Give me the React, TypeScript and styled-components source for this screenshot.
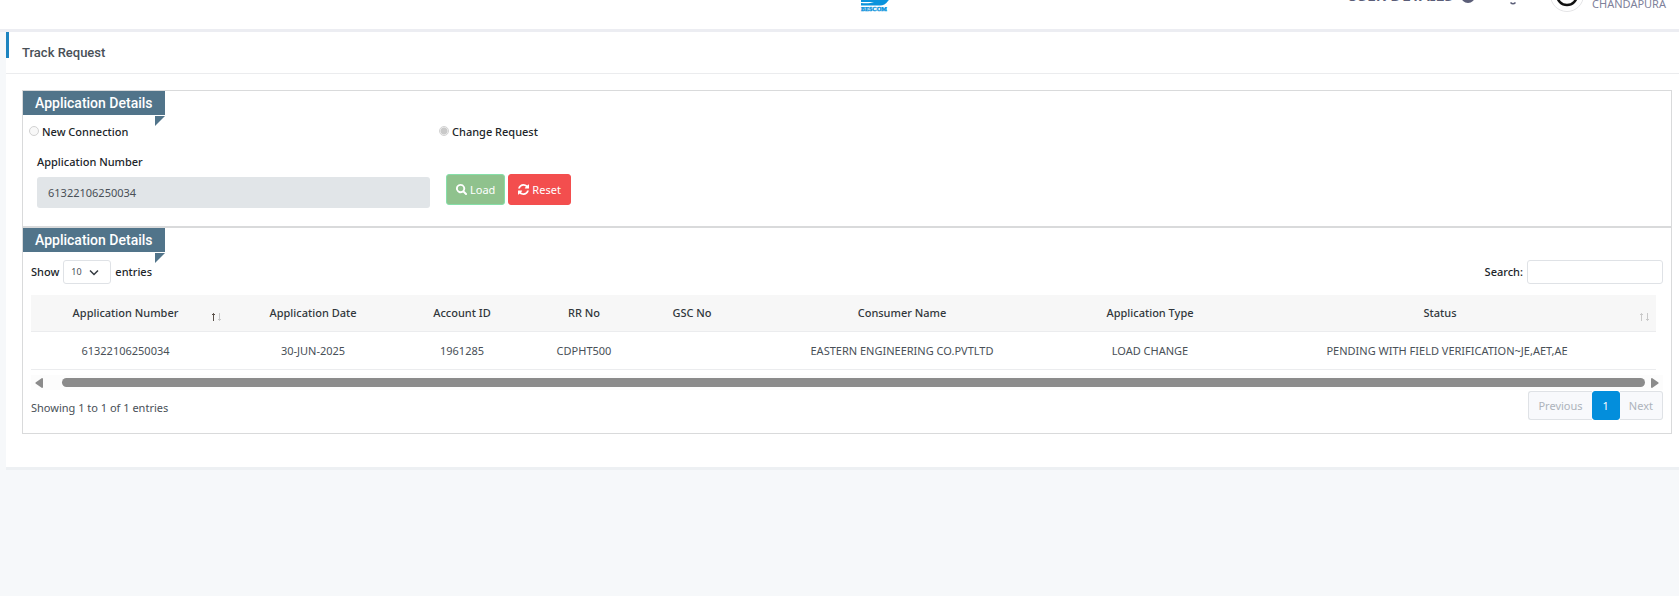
import React from 'react';
import styled, { createGlobalStyle } from 'styled-components';

const GlobalStyle = createGlobalStyle`
  *, *::before, *::after { box-sizing: border-box; }
  body {
    margin: 0;
    background: #f6f8fa;
    color: #495057;
    font-family: "Noto Sans", "Open Sans", sans-serif;
    font-size: 11px;
    line-height: 16px;
  }
  button, input, select { font: inherit; }
`;

const TopBar = styled.header`
  display: grid;
  grid-template-columns: 1fr auto 1fr;
  grid-template-rows: 29px;
  align-items: end;
  height: 32px;
  padding: 0 13px 0 83px;
  overflow: hidden;
  background: #fff;
  border-bottom: 3px solid #ecedf2;
`;

const Logo = styled.svg`
  grid-column: 2;
  display: block;
  width: 30px;
  height: 40px;
  margin-bottom: 17px;
`;

const UserArea = styled.div`
  display: flex;
  justify-content: flex-end;
  align-items: flex-end;
  color: #5b5e78;
`;

const GuideLink = styled.a`
  display: flex;
  align-items: flex-end;
  gap: 8px;
  margin-bottom: 26px;
  color: inherit;
  font-size: 16px;
  font-weight: 600;
  line-height: 16px;
  text-decoration: none;
`;

const InfoDot = styled.svg`
  width: 14px;
  height: 14px;
`;

const Bell = styled.svg`
  width: 14px;
  height: 18px;
  margin: 0 30px 24px 31px;
`;

const Avatar = styled.svg`
  width: 34px;
  height: 34px;
  margin: 0 8px 17px 0;
`;

const Place = styled.span`
  margin-bottom: 17px;
  color: #7e819a;
`;

const Card = styled.main`
  margin-left: 6px;
  background: #fff;
  border-bottom: 3px solid #edf0f3;
`;

const CardHeader = styled.div`
  display: flex;
  align-items: flex-start;
  height: 42px;
  border-bottom: 1px solid #ebecee;
`;

const Accent = styled.span`
  width: 3px;
  height: 26px;
  background: #1c84c0;
`;

const PageTitle = styled.h1`
  margin: 12px 0 0 13px;
  color: #495057;
  font: 500 13px/18px Roboto, sans-serif;
`;

const CardBody = styled.div`
  padding: 16px 7px 33px 16px;
`;

const Panel = styled.section`
  border: 1px solid #d9dadb;
`;

const Ribbon = styled.h2`
  position: relative;
  width: 142px;
  height: 24px;
  margin: 0;
  padding-left: 12px;
  background: #51748a;
  color: #fff;
  font: 500 14px/24px Roboto, sans-serif;
  white-space: nowrap;

  &::after {
    content: "";
    position: absolute;
    right: 0;
    top: 25px;
    border-top: 10px solid #51748a;
    border-right: 10px solid transparent;
  }
`;

const RadioRow = styled.div`
  display: grid;
  grid-template-columns: repeat(4, 1fr);
  padding: 9px 2px 0 6px;
`;

const RadioLabel = styled.label`
  display: flex;
  align-items: center;
  gap: 3px;
  color: #212529;
  font-weight: 500;
`;

const Radio = styled.input`
  appearance: none;
  width: 10px;
  height: 10px;
  margin: 0 0 2px;
  border: 1px solid #d2d2d2;
  border-radius: 50%;
  background: #f8f8f8;

  &:checked {
    background: radial-gradient(circle, #c9c9c9 0 3px, #f8f8f8 4px);
  }
`;

const FormRow = styled.div`
  display: grid;
  grid-template-columns: repeat(4, 1fr);
  gap: 16px;
  align-items: end;
  padding: 14px 14px 18px;
`;

const Field = styled.div`
  display: flex;
  flex-direction: column;
  gap: 7px;
`;

const FieldLabel = styled.label`
  color: #212529;
  font-weight: 500;
`;

const TextBox = styled.input`
  width: 100%;
  height: 31px;
  padding: 0 11px;
  border: 0;
  border-radius: 3px;
  background: #e1e5e8;
  color: #495057;
`;

const Buttons = styled.div`
  display: flex;
  gap: 3px;
  padding-bottom: 3px;
`;

const ActionButton = styled.button<{ $tone: 'load' | 'reset' }>`
  display: flex;
  align-items: center;
  gap: 3px;
  height: 31px;
  padding: 0 9px;
  border: 1px solid ${p => (p.$tone === 'load' ? '#86dfa9' : '#f34e4e')};
  border-radius: 3px;
  background: ${p => (p.$tone === 'load' ? '#8fc28d' : '#f34e4e')};
  color: #fff;
  white-space: nowrap;

  svg { width: 11px; height: 11px; fill: currentColor; }
`;

const Toolbar = styled.div`
  display: flex;
  justify-content: space-between;
  padding: 8px 8px 0;
`;

const ToolLabel = styled.label`
  display: flex;
  align-items: center;
  gap: 4px;
  color: #212529;
  font-weight: 500;
`;

const LengthBox = styled.span`
  position: relative;
  display: flex;

  svg {
    position: absolute;
    right: 12px;
    top: 9px;
    width: 10px;
    height: 7px;
    pointer-events: none;
  }
`;

const LengthSelect = styled.select`
  appearance: none;
  width: 48px;
  height: 24px;
  padding: 0 7px;
  border: 1px solid #dfe2e6;
  border-radius: 3px;
  background: #fff;
  color: #495057;
  font-size: 9px;
  font-weight: 400;
`;

const SearchBox = styled.input`
  width: 136px;
  height: 24px;
  border: 1px solid #dfe2e6;
  border-radius: 3px;
  background: #fff;
`;

const TableWrap = styled.div`
  padding: 11px 15px 0 8px;
`;

const Table = styled.table`
  width: 100%;
  table-layout: fixed;
  border-collapse: separate;
  border-spacing: 0;
  text-align: center;
`;

const HeadCell = styled.th<{ $end?: number }>`
  position: relative;
  height: 37px;
  padding: 0 ${p => p.$end ?? 0}px 0 0;
  border-bottom: 1px solid #ebecee;
  background: #f7f7f7;
  color: #32373c;
  font-weight: 500;
`;

const SortIcon = styled.svg`
  position: absolute;
  right: 6px;
  bottom: 9px;
  width: 11px;
  height: 10px;
`;

const Cell = styled.td<{ $end?: number }>`
  height: 38px;
  padding: 0 ${p => p.$end ?? 0}px 0 0;
  border-bottom: 1px solid #ebecee;
  white-space: nowrap;
`;

const ScrollBar = styled.div`
  display: flex;
  align-items: center;
  gap: 9px;
  height: 15px;
  margin: 5px 8px 0;
  padding: 0 4px;
  background: #fcfcfc;
`;

const ScrollArrow = styled.button`
  display: flex;
  padding: 0;
  border: 0;
  background: none;

  svg { width: 8px; height: 10px; fill: #8b8b8b; }
`;

const Thumb = styled.div`
  flex: 1;
  height: 9px;
  margin: 0 -3px 0 10px;
  border-radius: 5px;
  background: #8b8b8b;
`;

const TableFooter = styled.div`
  display: flex;
  justify-content: space-between;
  padding: 1px 8px 13px;
`;

const Info = styled.p`
  margin: 9px 0 0;
`;

const Pager = styled.nav`
  display: flex;
`;

const PageButton = styled.button<{ $active?: boolean; $side?: 'left' | 'right' }>`
  height: 29px;
  padding: 0 ${p => (p.$active ? 10 : 9)}px;
  border: 1px solid ${p => (p.$active ? '#038edc' : '#dfe2e6')};
  border-${p => (p.$side === 'left' ? 'right' : 'left')}-width: ${p => (p.$active ? 1 : 0)}px;
  border-radius: ${p => (p.$active ? '3px' : p.$side === 'left' ? '3px 0 0 3px' : '0 3px 3px 0')};
  background: ${p => (p.$active ? '#038edc' : '#f8f9fc')};
  color: ${p => (p.$active ? '#fff' : '#adb3bb')};
`;

type Column = { title: string; value: string; width: number; sort?: 'asc' | 'none'; headEnd?: number; cellEnd?: number };

const columns: Column[] = [
  { title: 'Application Number', value: '61322106250034', width: 197, sort: 'asc', headEnd: 8, cellEnd: 8 },
  { title: 'Application Date', value: '30-JUN-2025', width: 170 },
  { title: 'Account ID', value: '1961285', width: 128 },
  { title: 'RR No', value: 'CDPHT500', width: 116 },
  { title: 'GSC No', value: '', width: 100 },
  { title: 'Consumer Name', value: 'EASTERN ENGINEERING CO.PVTLTD', width: 320 },
  { title: 'Application Type', value: 'LOAD CHANGE', width: 176 },
  { title: 'Status', value: 'PENDING WITH FIELD VERIFICATION~JE,AET,AE', width: 418, sort: 'none', headEnd: 14 },
];

function Sort({ active }: { active: boolean }) {
  return (
    <SortIcon viewBox="0 0 11 10" fill="none" aria-hidden="true">
      <path d="M2.5 9V1.5M1 3l1.5-1.5L4 3" stroke={active ? '#5a5048' : '#c9c9c9'} />
      <path d="M8.5 1v7.500M7 7l1.500 1.500L10 7" stroke="#c9c9c9" />
    </SortIcon>
  );
}

export default function App() {
  return (
    <>
      <GlobalStyle />
      <TopBar>
        <Logo viewBox="0 0 30 40" role="img" aria-label="BESCOM">
          <path d="M1 0h29c1 15 3 24-2 29-2 3-5 4.500-8 4.500H1V31c5 .5 9 .5 13-1H1z" fill="#0a93dc" />
          <text x="14" y="39" textAnchor="middle" textRendering="geometricPrecision" fontFamily="Liberation Serif, serif" fontWeight="700" fontSize="6" fill="#0a93dc" stroke="#0a93dc" strokeWidth=".4">BESCOM</text>
        </Logo>
        <UserArea>
          <GuideLink href="#">
            USER DETAILS
            <InfoDot viewBox="0 0 14 14" aria-hidden="true"><circle cx="7" cy="7" r="7" fill="#5b5e78" /></InfoDot>
          </GuideLink>
          <Bell viewBox="0 0 14 18" fill="none" stroke="#5b5e78" strokeWidth="1.600" aria-hidden="true">
            <path d="M1 11c2-2 1.500-4 2-6 .5-5 7.500-5 8 0 .5 2 0 4 2 6zM4.500 15.500q2.500 2.500 5 0" />
          </Bell>
          <Avatar viewBox="0 0 34 34" aria-hidden="true">
            <circle cx="17" cy="17" r="16.500" fill="#fff" stroke="#e4e4e6" />
            <circle cx="17" cy="17" r="10" fill="#fff" stroke="#111" strokeWidth="2.500" />
          </Avatar>
          <Place>CHANDAPURA</Place>
        </UserArea>
      </TopBar>

      <Card>
        <CardHeader>
          <Accent />
          <PageTitle>Track Request</PageTitle>
        </CardHeader>
        <CardBody>
          <Panel>
            <Ribbon>Application Details</Ribbon>
            <RadioRow>
              <RadioLabel><Radio type="radio" name="kind" disabled />New Connection</RadioLabel>
              <RadioLabel><Radio type="radio" name="kind" disabled defaultChecked />Change Request</RadioLabel>
            </RadioRow>
            <FormRow>
              <Field>
                <FieldLabel htmlFor="appNo">Application Number</FieldLabel>
                <TextBox id="appNo" defaultValue="61322106250034" disabled />
              </Field>
              <Buttons>
                <ActionButton $tone="load" type="button" disabled>
                  <svg viewBox="0 0 12 12" aria-hidden="true">
                    <path fillRule="evenodd" d="M5 0a5 5 0 1 0 2.700 9.200L10.200 11.700a1 1 0 0 0 1.500-1.500L9.200 7.700A5 5 0 0 0 5 0zm0 2a3 3 0 1 1 0 6 3 3 0 0 1 0-6z" />
                  </svg>
                  Load
                </ActionButton>
                <ActionButton $tone="reset" type="button">
                  <svg viewBox="0 0 1536 1536" aria-hidden="true">
                    <path d="M1511 928q0 5-1 7-64 268-268 434.500T764 1536q-146 0-282.500-55T238 1324l-129 129q-19 19-45 19t-45-19-19-45V960q0-26 19-45t45-19h448q26 0 45 19t19 45-19 45l-137 137q71 66 161 102t187 36q134 0 250-65t186-179q11-17 53-117 8-23 30-23h192q13 0 22.500 9.500t9.500 22.500zm25-800v448q0 26-19 45t-45 19h-448q-26 0-45-19t-19-45 19-45l138-138Q969 256 768 256q-134 0-250 65T332 500q-11 17-53 117-8 23-30 23H50q-13 0-22.500-9.500T18 608v-7q65-268 270-434.500T768 0q146 0 284 55.500T1297 212l130-129q19-19 45-19t45 19 19 45z" />
                  </svg>
                  Reset
                </ActionButton>
              </Buttons>
            </FormRow>
          </Panel>

          <Panel>
            <Ribbon>Application Details</Ribbon>
            <Toolbar>
              <ToolLabel>
                Show
                <LengthBox>
                  <LengthSelect defaultValue="10">
                    <option>10</option>
                    <option>25</option>
                    <option>50</option>
                  </LengthSelect>
                  <svg viewBox="0 0 10 7" fill="none" stroke="#343a40" strokeWidth="1.500" aria-hidden="true"><path d="M1 1.500l4 4 4-4" /></svg>
                </LengthBox>
                entries
              </ToolLabel>
              <ToolLabel>
                Search:
                <SearchBox type="search" />
              </ToolLabel>
            </Toolbar>
            <TableWrap>
              <Table>
                <colgroup>
                  {columns.map(c => <col key={c.title} width={c.width} />)}
                </colgroup>
                <thead>
                  <tr>
                    {columns.map(c => (
                      <HeadCell key={c.title} scope="col" $end={c.headEnd}>
                        {c.title}
                        {c.sort && <Sort active={c.sort === 'asc'} />}
                      </HeadCell>
                    ))}
                  </tr>
                </thead>
                <tbody>
                  <tr>
                    {columns.map(c => <Cell key={c.title} $end={c.cellEnd}>{c.value}</Cell>)}
                  </tr>
                </tbody>
              </Table>
            </TableWrap>
            <ScrollBar>
              <ScrollArrow type="button" aria-label="Scroll left">
                <svg viewBox="0 0 8 10"><path d="M7 0q1 0 1 1v8q0 1-1 1L.5 5.500v-1z" /></svg>
              </ScrollArrow>
              <Thumb />
              <ScrollArrow type="button" aria-label="Scroll right">
                <svg viewBox="0 0 8 10"><path d="M1 0Q0 0 0 1v8q0 1 1 1l6.500-4.500v-1z" /></svg>
              </ScrollArrow>
            </ScrollBar>
            <TableFooter>
              <Info>Showing 1 to 1 of 1 entries</Info>
              <Pager aria-label="Table pages">
                <PageButton $side="left" disabled>Previous</PageButton>
                <PageButton $active>1</PageButton>
                <PageButton $side="right" disabled>Next</PageButton>
              </Pager>
            </TableFooter>
          </Panel>
        </CardBody>
      </Card>
    </>
  );
}
